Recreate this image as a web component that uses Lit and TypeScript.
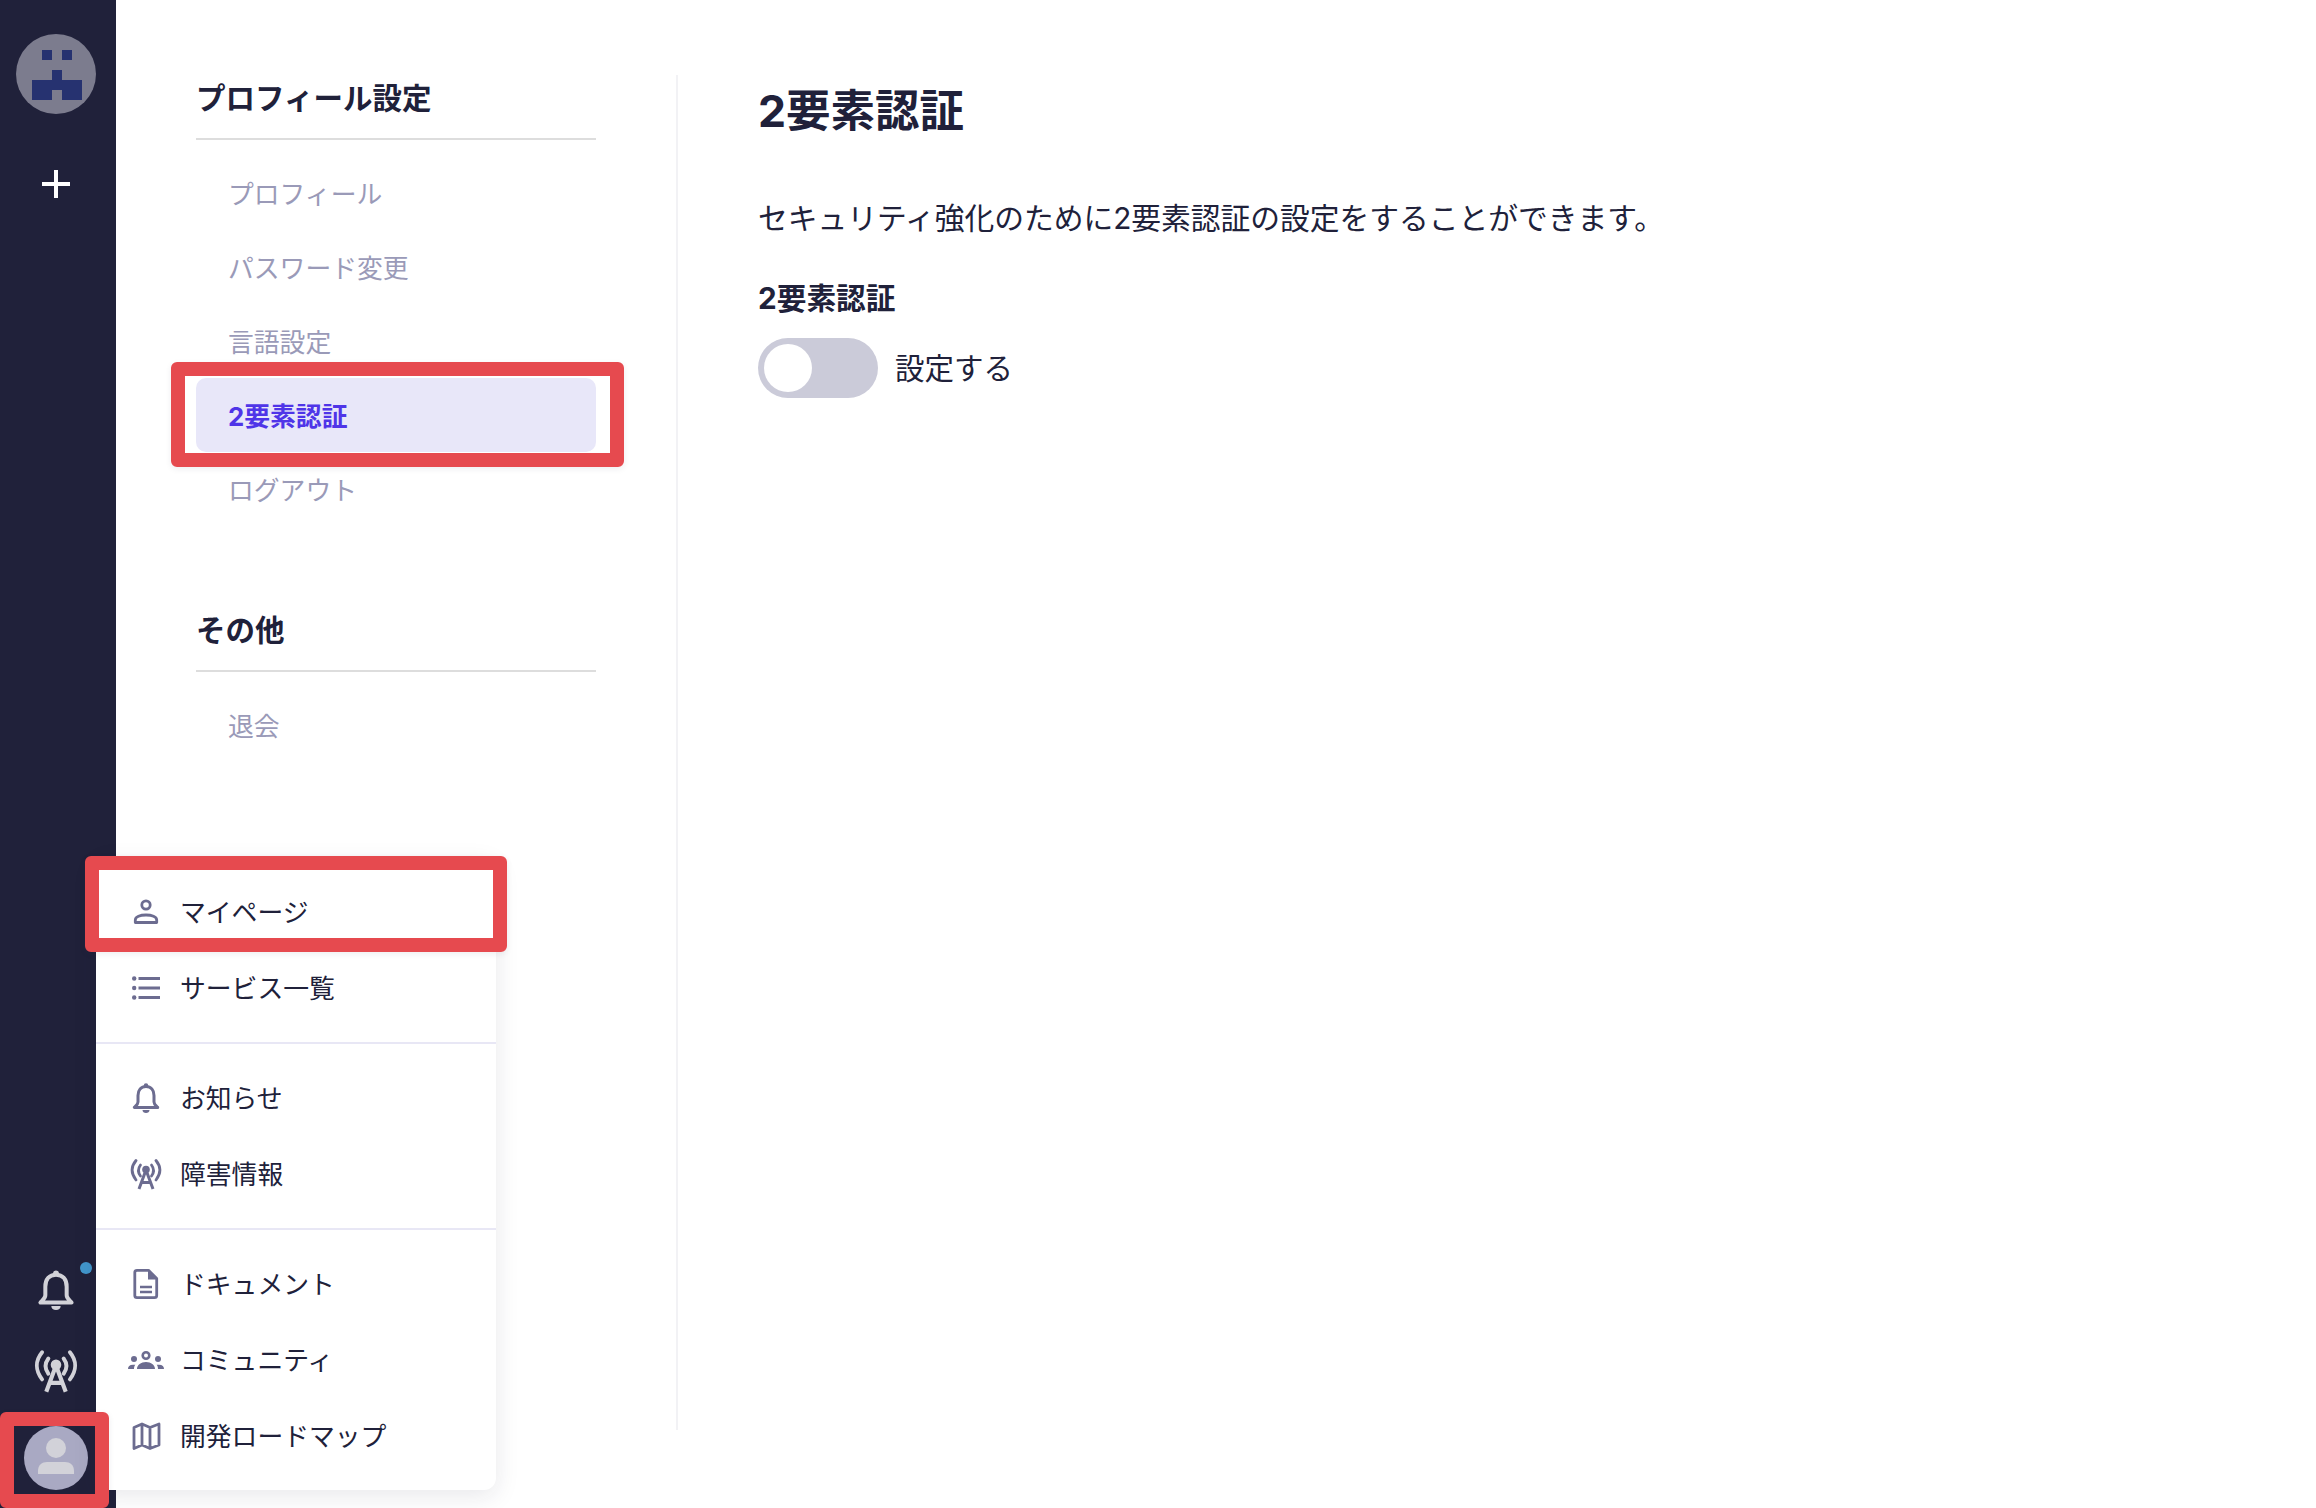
import { LitElement, html, css, svg } from "lit";
import { customElement } from "lit/decorators.js";

const bellIcon = svg`<circle cx="18" cy="5.5" r="2.200" fill="currentColor"/><path d="M18 6.500c-5 0-8 3.500-8 9v6.500c0 2.200-2 3.600-3.700 5.400h23.400c-1.700-1.800-3.700-3.200-3.700-5.400v-6.500c0-5.500-3-9-8-9z" fill="none" stroke="currentColor" stroke-width="3" stroke-linejoin="round"/><path d="M14.500 30h7c0 1.800-1.500 3-3.500 3s-3.500-1.200-3.500-3z" fill="currentColor"/>`;
const antennaIcon = svg`<g fill="none" stroke="currentColor" stroke-width="2.800" stroke-linecap="round"><path d="M8 4.500c-5 6-5 13 0 19.500"/><path d="M12.500 9c-2.600 3.500-2.600 7.500 0 11"/><path d="M28 4.500c5 6 5 13 0 19.500"/><path d="M23.500 9c2.600 3.500 2.600 7.500 0 11"/><path d="M18 14 11 33M18 14l7 19M14 26.500h8" stroke-linecap="butt" stroke-width="3"/></g><circle cx="18" cy="13.500" r="3.800" fill="currentColor"/>`;
const personIcon = svg`<g fill="none" stroke="currentColor" stroke-width="2.800"><circle cx="18" cy="11" r="4.200"/><path d="M7.300 28.500v-2.500c0-3.300 5-5 10.700-5s10.700 1.700 10.700 5v2.500z" stroke-linejoin="round"/></g>`;
const listIcon = svg`<g stroke="currentColor" stroke-width="2.800"><path d="M10.500 8.500H32M10.500 18H32M10.500 27.500H32"/></g><g fill="currentColor"><circle cx="6.200" cy="8.500" r="2.200"/><circle cx="6.200" cy="18" r="2.200"/><circle cx="6.200" cy="27.500" r="2.200"/></g>`;
const docIcon = svg`<path d="M9 4.300h11.500l8.200 8.200v17a2.200 2.200 0 0 1-2.200 2.200h-17.500a2.200 2.200 0 0 1-2.200-2.200v-23a2.200 2.200 0 0 1 2.200-2.200z" fill="none" stroke="currentColor" stroke-width="2.800" stroke-linejoin="round"/><path d="M20 4l9.500 9.500H20z" fill="currentColor"/><path d="M12 21h12M12 26h12" stroke="currentColor" stroke-width="2.600"/>`;
const peopleIcon = svg`<g fill="currentColor"><circle cx="6" cy="17" r="3"/><circle cx="30" cy="17" r="3"/><path d="M0 27c0-2.500 1.500-4.300 5-4.300h2.300C6.300 24 6 25.500 6 27zM36 27c0-2.500-1.500-4.300-5-4.300h-2.300c1 1.300 1.300 2.800 1.300 4.300zM9 27c0-4 4-7 9-7s9 3 9 7z"/></g><circle cx="18" cy="13.500" r="3.300" fill="none" stroke="currentColor" stroke-width="2.600"/>`;
const mapIcon = svg`<path d="M6 9.500l8-3.500 8 3.500 9-3.500v21l-9 3.500-8-3.500-8 3.500zM14 6v21M22 9.500v21" fill="none" stroke="currentColor" stroke-width="2.800" stroke-linejoin="round"/>`;

const icon = (content: unknown, cls = "ico") =>
  html`<svg class=${cls} viewBox="0 0 36 36">${content}</svg>`;

const menuGroups = [
  [
    { icon: personIcon, label: "マイページ", mark: true },
    { icon: listIcon, label: "サービス一覧" },
  ],
  [
    { icon: bellIcon, label: "お知らせ" },
    { icon: antennaIcon, label: "障害情報" },
  ],
  [
    { icon: docIcon, label: "ドキュメント" },
    { icon: peopleIcon, label: "コミュニティ" },
    { icon: mapIcon, label: "開発ロードマップ" },
  ],
];

@customElement("app-root")
export class AppRoot extends LitElement {
  static styles = css`
    :host {
      display: block;
      font-family: Inter, "Noto Sans CJK JP", sans-serif;
      color: #20213a;
    }
    .page {
      display: flex;
      height: 1508px;
      overflow: hidden;
      background: #fff;
    }
    .rail {
      width: 116px;
      flex: none;
      background: #20213a;
      display: flex;
      flex-direction: column;
      align-items: center;
      padding: 34px 4px 18px 0;
      box-sizing: border-box;
      color: #d2d2d8;
    }
    .logo {
      width: 80px;
      height: 80px;
      display: block;
    }
    .plus {
      width: 28px;
      height: 28px;
      margin-top: 56px;
      display: block;
    }
    .bell-wrap {
      position: relative;
      width: 48px;
      height: 48px;
      margin-top: auto;
    }
    .rail-bell {
      width: 48px;
      height: 48px;
      display: block;
    }
    .dot {
      position: absolute;
      left: 48px;
      top: -4px;
      width: 12px;
      height: 12px;
      border-radius: 50%;
      background: #4296cb;
    }
    .rail-antenna {
      width: 50px;
      height: 50px;
      margin-top: 32px;
      display: block;
    }
    .avatar-wrap {
      position: relative;
      width: 64px;
      height: 64px;
      margin-top: 30px;
    }
    .avatar {
      width: 64px;
      height: 64px;
      display: block;
    }
    .mark {
      position: absolute;
      border: 14px solid #e64a4f;
      border-radius: 6px;
      box-sizing: border-box;
      z-index: 5;
      box-shadow: 0 2px 6px rgba(32, 33, 58, 0.08);
      pointer-events: none;
    }
    .mark-avatar {
      left: -24px;
      right: -21px;
      top: -14px;
      bottom: -18px;
    }
    .mark-nav {
      left: -25px;
      right: -28px;
      top: -16px;
      bottom: -15px;
    }
    .mark-menu {
      left: -11px;
      right: -11px;
      top: -18px;
      bottom: -2px;
    }
    .menu {
      position: absolute;
      left: 72px;
      bottom: 0;
      width: 400px;
      background: #fff;
      border-radius: 12px;
      box-shadow: 0 6px 24px rgba(32, 33, 58, 0.1);
      color: #20213a;
      z-index: 3;
    }
    .menu-group {
      padding: 16px 0;
      border-top: 2px solid #e8e7f5;
    }
    .menu-group:first-child {
      border-top: 0;
    }
    .menu-item {
      position: relative;
      display: flex;
      align-items: center;
      gap: 16px;
      height: 76px;
      padding-left: 32px;
      font-size: 25.800px;
      white-space: nowrap;
    }
    .menu-text {
      margin-bottom: 3px;
    }
    .ico {
      width: 36px;
      height: 36px;
      flex: none;
      color: #6c6c90;
    }
    .nav {
      width: 400px;
      flex: none;
      margin-left: 80px;
      padding-top: 76px;
    }
    .nav-title {
      margin: 0 0 16px;
      font-size: 29.500px;
      line-height: 44px;
      font-weight: 700;
      padding-bottom: 18px;
      border-bottom: 2px solid #ddd;
    }
    .nav-section + .nav-section {
      margin-top: 82px;
    }
    .nav-item {
      position: relative;
      display: flex;
      align-items: center;
      height: 74px;
      box-sizing: border-box;
      padding: 0 0 2px 32px;
      font-size: 25.800px;
      color: #9a9ab8;
      border-radius: 10px;
    }
    .nav-item.active {
      background: #e8e7f9;
      color: #4f35e8;
      font-weight: 700;
    }
    .content {
      margin: 75px 0 78px 80px;
      padding: 6px 0 0 80px;
      border-left: 2px solid #f2f2f5;
      flex: 1;
    }
    .title {
      margin: 0;
      font-size: 44.500px;
      line-height: 60px;
      font-weight: 700;
    }
    .desc {
      margin: 55px 0 0;
      font-size: 29.750px;
      line-height: 44px;
    }
    .field-label {
      margin-top: 38px;
      font-size: 29.700px;
      line-height: 40px;
      font-weight: 700;
    }
    .toggle-row {
      display: flex;
      align-items: center;
      gap: 17px;
      margin-top: 20px;
      font-size: 29.500px;
    }
    .toggle-text {
      margin-bottom: 4px;
    }
    .toggle {
      width: 120px;
      height: 60px;
      box-sizing: border-box;
      padding: 6px;
      border-radius: 30px;
      background: #cbcbd9;
    }
    .thumb {
      width: 48px;
      height: 48px;
      border-radius: 50%;
      background: #fff;
    }
  `;

  private renderMenu() {
    return html`<div class="menu">
      ${menuGroups.map(
        (g) => html`<div class="menu-group">
          ${g.map(
            (it) => html`<div class="menu-item">
              ${icon(it.icon)}<span class="menu-text">${it.label}</span>
              ${(it as { mark?: boolean }).mark
                ? html`<div class="mark mark-menu"></div>`
                : ""}
            </div>`
          )}
        </div>`
      )}
    </div>`;
  }

  render() {
    return html`<div class="page">
      <aside class="rail">
        <svg class="logo" viewBox="0 0 80 80">
          <circle cx="40" cy="40" r="40" fill="#7c7c8e" />
          <path
            d="M26 16h10v10H26zM46 16h10v10H46zM36 36h10v10h20v20H46V56H36v10H16V46h20z"
            fill="#263270"
          />
        </svg>
        <svg class="plus" viewBox="0 0 28 28">
          <path d="M14 0v28M0 14h28" stroke="#fff" stroke-width="4" />
        </svg>
        <div class="bell-wrap">
          ${icon(bellIcon, "rail-bell")}
          <span class="dot"></span>
        </div>
        ${icon(antennaIcon, "rail-antenna")}
        <div class="avatar-wrap">
          <svg class="avatar" viewBox="0 0 64 64">
            <circle cx="32" cy="32" r="32" fill="#a9a9c3" />
            <circle cx="32" cy="22" r="10" fill="#d2d2d9" />
            <path
              d="M14 48v-3c0-6 4-9 9-9h18c5 0 9 3 9 9v3z"
              fill="#d2d2d9"
            />
          </svg>
          ${this.renderMenu()}
          <div class="mark mark-avatar"></div>
        </div>
      </aside>

      <nav class="nav">
        <section class="nav-section">
          <h2 class="nav-title">プロフィール設定</h2>
          <div class="nav-item">プロフィール</div>
          <div class="nav-item">パスワード変更</div>
          <div class="nav-item">言語設定</div>
          <div class="nav-item active">
            2要素認証
            <div class="mark mark-nav"></div>
          </div>
          <div class="nav-item">ログアウト</div>
        </section>
        <section class="nav-section">
          <h2 class="nav-title">その他</h2>
          <div class="nav-item">退会</div>
        </section>
      </nav>

      <main class="content">
        <h1 class="title">2要素認証</h1>
        <p class="desc">
          セキュリティ強化のために2要素認証の設定をすることができます。
        </p>
        <div class="field-label">2要素認証</div>
        <div class="toggle-row">
          <div class="toggle"><div class="thumb"></div></div>
          <span class="toggle-text">設定する</span>
        </div>
      </main>
    </div>`;
  }
}
